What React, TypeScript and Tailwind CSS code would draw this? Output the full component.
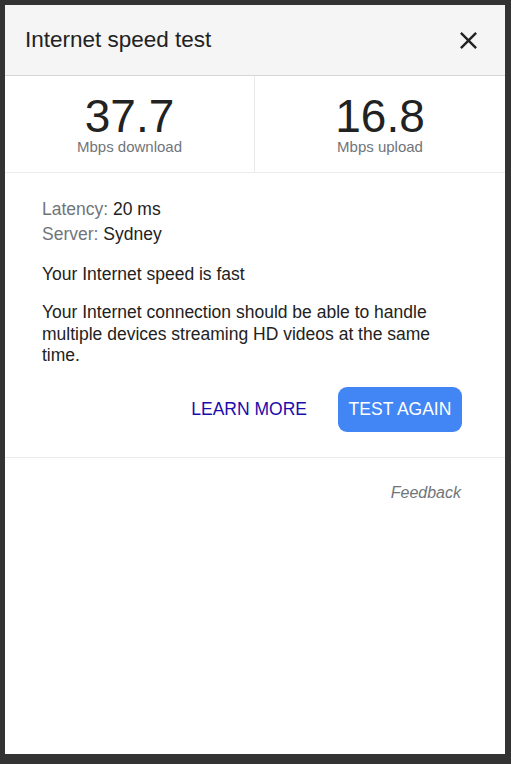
import React from 'react';

const App: React.FC = () => {
  return (
    <div
      className="h-[764px] w-full bg-[#333333] pt-[5px] pl-[5px] pr-[6px] pb-[10px]"
      style={{ fontFamily: '"Liberation Sans", Arial, sans-serif' }}
    >
      <div className="flex h-full flex-col bg-white text-[#222222]">
        <div className="flex h-[71px] items-center justify-between border-b border-[#d6d6d6] bg-[#f5f5f5] pl-[20px] pr-[22px]">
          <h1 className="text-[22.5px] leading-none">Internet speed test</h1>
          <button className="flex items-center justify-center" aria-label="Close">
            <svg width="29" height="29" viewBox="0 0 24 24" fill="#222222">
              <path d="M19 6.41L17.59 5 12 10.59 6.41 5 5 6.41 10.59 12 5 17.59 6.41 19 12 13.41 17.59 19 19 17.59 13.41 12z" />
            </svg>
          </button>
        </div>

        <div className="grid h-[97px] grid-cols-2 border-b border-[#ebebeb]">
          <div className="flex flex-col items-center justify-center border-r border-[#ebebeb]">
            <span className="text-[46px] leading-[44px]">37.7</span>
            <span className="text-[15px] leading-[17px] text-[#70757a]">Mbps download</span>
          </div>
          <div className="flex flex-col items-center justify-center">
            <span className="text-[46px] leading-[44px]">16.8</span>
            <span className="text-[15px] leading-[17px] text-[#70757a]">Mbps upload</span>
          </div>
        </div>

        <div className="border-b border-[#ebebeb] pl-[37px] pr-[43px] pt-[24px] pb-[25px] text-[17.5px]">
          <div className="leading-[25px]">
            <span className="text-[#70757a]">Latency:</span> 20 ms
          </div>
          <div className="leading-[25px]">
            <span className="text-[#70757a]">Server:</span> Sydney
          </div>
          <p className="mt-[15px] leading-[25px]">Your Internet speed is fast</p>
          <p className="mt-[15px] leading-[21.5px]">
            Your Internet connection should be able to handle multiple devices streaming HD videos at the same time.
          </p>
          <div className="mt-[20px] flex items-center justify-end gap-[31px]">
            <button className="text-[17.5px] text-[#1a0dab]">LEARN MORE</button>
            <button className="h-[45px] w-[124px] rounded-[9px] bg-[#4285f4] text-[17.5px] text-white">
              TEST AGAIN
            </button>
          </div>
        </div>

        <div className="flex justify-end pr-[44px] pt-[26px]">
          <span className="text-[16px] leading-[17px] italic text-[#70757a]">Feedback</span>
        </div>
      </div>
    </div>
  );
};

export default App;
